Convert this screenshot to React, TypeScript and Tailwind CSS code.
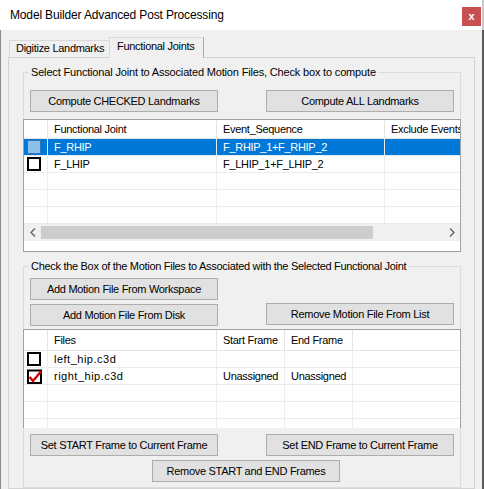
import React from "react";

const BTN =
  "h-[22px] w-[188px] shrink-0 border border-[#adadad] bg-[#e1e1e1] flex items-center justify-center text-black leading-none whitespace-nowrap";

function SelBox() {
  return <div className="w-[14px] h-[14px] bg-[#8cbfec] border border-[#2f76bd]" />;
}
function EmptyBox() {
  return <div className="w-[14px] h-[14px] bg-white border-2 border-black" />;
}
function CheckedBox() {
  return (
    <svg width="15" height="15" viewBox="0 0 15 15">
      <rect x="1" y="1.5" width="13" height="12.5" fill="white" stroke="black" strokeWidth="2" />
      <polyline points="2.5,8 6,12 14,2.5" fill="none" stroke="#d40000" strokeWidth="2.4" />
    </svg>
  );
}

function Chevron({ dir }: { dir: "l" | "r" }) {
  return (
    <svg width="6" height="9" viewBox="0 0 6 9">
      <polyline
        points={dir === "l" ? "5,0.5 1,4.5 5,8.5" : "1,0.5 5,4.5 1,8.5"}
        fill="none"
        stroke="#606060"
        strokeWidth="1.3"
      />
    </svg>
  );
}

function Grid1() {
  const rows: { sel?: boolean; box?: "sel" | "empty"; a: string; b: string }[] = [
    { sel: true, box: "sel", a: "F_RHIP", b: "F_RHIP_1+F_RHIP_2" },
    { box: "empty", a: "F_LHIP", b: "F_LHIP_1+F_LHIP_2" },
    { a: "", b: "" },
    { a: "", b: "" },
    { a: "", b: "" },
  ];
  return (
    <div className="-mx-[1px] -mb-[1px] mt-[7px] h-[133px] min-w-0 shrink-0 border border-[#a0a0a0] bg-white flex flex-col overflow-hidden">
      <div className="h-[19px] shrink-0 flex border-b border-[#e5e5e5]">
        <div className="w-[24px] shrink-0 border-r border-[#e5e5e5]" />
        <div className="w-[169px] shrink-0 border-r border-[#e5e5e5] pl-[6px] flex items-center">Functional Joint</div>
        <div className="w-[168px] shrink-0 border-r border-[#e5e5e5] pl-[6px] flex items-center">Event_Sequence</div>
        <div className="flex-1 min-w-0 w-0 pl-[6px] flex items-center whitespace-nowrap overflow-hidden">Exclude Events</div>
      </div>
      {rows.map((r, i) => (
        <div
          key={i}
          className={`h-[17px] shrink-0 flex border-b border-[#ececec] ${r.sel ? "bg-[#0078d7] text-white" : ""}`}
        >
          <div className="w-[24px] shrink-0 border-r border-[#ececec] flex items-center pl-[3px]">
            {r.box === "sel" ? <SelBox /> : r.box === "empty" ? <EmptyBox /> : null}
          </div>
          <div className="w-[169px] shrink-0 border-r border-[#ececec] pl-[6px] flex items-center">{r.a}</div>
          <div className="w-[168px] shrink-0 border-r border-[#ececec] pl-[6px] flex items-center">{r.b}</div>
          <div className="flex-1" />
        </div>
      ))}
      <div className="h-[17px] shrink-0 bg-[#f0f0f0] flex items-center">
        <div className="w-[17px] h-[17px] flex items-center justify-center">
          <Chevron dir="l" />
        </div>
        <div className="w-[332px] h-[13px] bg-[#cdcdcd]" />
        <div className="flex-1" />
        <div className="w-[17px] h-[17px] flex items-center justify-center">
          <Chevron dir="r" />
        </div>
      </div>
      <div className="flex-1 bg-white" />
    </div>
  );
}

function Grid2() {
  const rows: { box?: "empty" | "checked"; a: string; s: string; e: string }[] = [
    { box: "empty", a: "left_hip.c3d", s: "", e: "" },
    { box: "checked", a: "right_hip.c3d", s: "Unassigned", e: "Unassigned" },
    { a: "", s: "", e: "" },
    { a: "", s: "", e: "" },
    { a: "", s: "", e: "" },
  ];
  return (
    <div className="-mx-[1px] mt-[3px] h-[99px] shrink-0 border-t border-l border-r border-[#a0a0a0] bg-white flex flex-col overflow-hidden">
      <div className="h-[21px] shrink-0 flex border-b border-[#e5e5e5]">
        <div className="w-[24px] shrink-0 border-r border-[#e5e5e5]" />
        <div className="w-[169px] shrink-0 border-r border-[#e5e5e5] pl-[6px] flex items-center">Files</div>
        <div className="w-[68px] shrink-0 border-r border-[#e5e5e5] pl-[6px] flex items-center">Start Frame</div>
        <div className="w-[68px] shrink-0 border-r border-[#e5e5e5] pl-[6px] flex items-center">End Frame</div>
        <div className="flex-1" />
      </div>
      {rows.map((r, i) => (
        <div key={i} className="h-[17px] shrink-0 flex border-b border-[#ececec]">
          <div className="w-[24px] shrink-0 border-r border-[#ececec] flex items-center pl-[3px]">
            {r.box === "checked" ? <CheckedBox /> : r.box === "empty" ? <EmptyBox /> : null}
          </div>
          <div className="w-[169px] shrink-0 border-r border-[#ececec] pl-[6px] flex items-center tracking-[0.5px]">{r.a}</div>
          <div className="w-[68px] shrink-0 border-r border-[#ececec] pl-[6px] flex items-center whitespace-nowrap">{r.s}</div>
          <div className="w-[68px] shrink-0 border-r border-[#ececec] pl-[6px] flex items-center whitespace-nowrap">{r.e}</div>
          <div className="flex-1" />
        </div>
      ))}
    </div>
  );
}

export default function App() {
  return (
    <div className="w-[484px] h-[489px] overflow-hidden flex bg-[#f0f0f0] text-black font-['Liberation_Sans',Arial,sans-serif] text-[11px] tracking-[-0.3px]">
      <div className="w-[482px] shrink-0 flex flex-col">
        <div className="h-[30px] shrink-0 bg-white flex items-start justify-between pl-[10px] pr-[1px]">
          <span className="text-[12px] tracking-[-0.15px] mt-[8px] leading-[15px]">
            Model Builder Advanced Post Processing
          </span>
          <div className="mt-[7px] w-[19px] h-[19px] bg-[#c75050] text-white text-[11px] font-bold tracking-normal flex items-center justify-center leading-none">
            x
          </div>
        </div>
        <div className="flex-1 flex flex-col border-l border-[#8a8a8a] pl-[7px] pt-[7px] min-h-0">
          <div className="h-[20px] shrink-0 flex items-end pl-[1px]">
            <div className="w-[100px] h-[17px] border-t border-l border-[#d9d9d9] pl-[6px] pt-[1px] leading-[13px] whitespace-nowrap">
              Digitize Landmarks
            </div>
            <div className="relative z-10 w-[95px] h-[21px] -mb-[1px] bg-[#f0f0f0] border-t border-l border-[#d9d9d9] border-r border-r-[#a8a8a8] pl-[7px] pt-[2px] leading-[13px] whitespace-nowrap">
              Functional Joints
            </div>
          </div>
          <div className="w-[467px] flex-1 shrink-0 border border-[#d4d4d4] pt-[7px] pl-[14px] flex flex-col">
            <fieldset className="w-[438px] min-w-0 shrink-0 border border-[#dcdcdc] flex flex-col">
              <legend className="ml-[5px] px-[2px] leading-[14px] tracking-[-0.17px]">
                Select Functional Joint to Associated Motion Files, Check box to compute
              </legend>
              <div className="mt-[11px] flex justify-between px-[6px]">
                <div className={BTN}>Compute CHECKED Landmarks</div>
                <div className={BTN}>Compute ALL Landmarks</div>
              </div>
              <Grid1 />
            </fieldset>
            <fieldset className="mt-[7px] w-[438px] min-w-0 shrink-0 border border-[#dcdcdc] flex flex-col pb-[5px]">
              <legend className="ml-[5px] px-[2px] leading-[14px]">
                Check the Box of the Motion Files to Associated with the Selected Functional Joint
              </legend>
              <div className="mt-[5px] flex justify-between items-end px-[6px]">
                <div className="flex flex-col gap-[4px]">
                  <div className={BTN}>Add Motion File From Workspace</div>
                  <div className={BTN}>Add Motion File From Disk</div>
                </div>
                <div className={`${BTN} mb-[1px]`}>Remove Motion File From List</div>
              </div>
              <Grid2 />
              <div className="mt-[6px] flex justify-between px-[6px]">
                <div className={BTN}>Set START Frame to Current Frame</div>
                <div className={BTN}>Set END Frame to Current Frame</div>
              </div>
              <div className="mt-[4px] pl-[128px] flex">
                <div className={BTN}>Remove START and END Frames</div>
              </div>
            </fieldset>
          </div>
        </div>
      </div>
      <div className="w-[2px] shrink-0 flex flex-col">
        <div className="h-[30px] bg-[#c8c8c8]" />
        <div className="flex-1 bg-[#5a5a5a]" />
      </div>
    </div>
  );
}
